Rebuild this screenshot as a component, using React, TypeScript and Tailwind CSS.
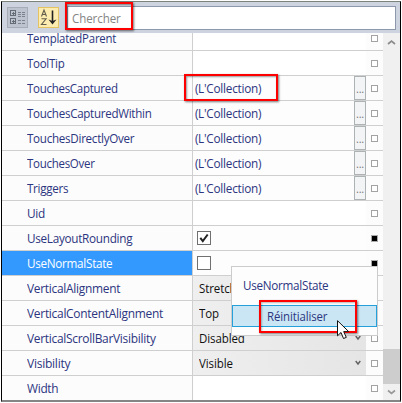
import React from "react";

type Kind = "empty" | "collection" | "checked" | "unchecked" | "select";
type Row = { name: string; kind: Kind; value?: string; set?: boolean; fit: string };

const rows: Row[] = [
  { name: "ToolTip", kind: "empty", fit: "scale-x-[0.92]" },
  { name: "TouchesCaptured", kind: "collection", fit: "scale-x-[0.92]" },
  { name: "TouchesCapturedWithin", kind: "collection", fit: "scale-x-[0.926]" },
  { name: "TouchesDirectlyOver", kind: "collection", fit: "scale-x-[0.93]" },
  { name: "TouchesOver", kind: "collection", fit: "scale-x-[0.92]" },
  { name: "Triggers", kind: "collection", fit: "scale-x-[0.93]" },
  { name: "Uid", kind: "empty", fit: "scale-x-[0.95]" },
  { name: "UseLayoutRounding", kind: "checked", set: true, fit: "scale-x-[0.938]" },
  { name: "UseNormalState", kind: "unchecked", set: true, fit: "scale-x-[0.935]" },
  { name: "VerticalAlignment", kind: "select", value: "Stretch", fit: "scale-x-[0.955]" },
  { name: "VerticalContentAlignment", kind: "select", value: "Top", fit: "scale-x-[0.957]" },
  { name: "VerticalScrollBarVisibility", kind: "select", value: "Disabled", fit: "scale-x-[0.955]" },
  { name: "Visibility", kind: "select", value: "Visible", fit: "scale-x-[0.97]" },
  { name: "Width", kind: "empty", fit: "scale-x-[0.95]" },
];

function Marker({ set }: { set?: boolean }) {
  return (
    <div className="w-[17px] shrink-0 bg-[#fcfcfc] pl-[5px] pt-[9px]">
      <div className={set ? "size-[7px] border border-[#aaa] bg-black" : "size-[7px] border border-[#a3a3a3] bg-white"} />
    </div>
  );
}

function Check({ on }: { on: boolean }) {
  return (
    <div className="ml-[4px] mt-[5px] size-[14px] border border-[#707070] bg-white">
      {on && (
        <svg width="12" height="12" viewBox="0 0 12 12" fill="none">
          <path d="M2.3 5.8 4.8 9.1 9.7 2.5" stroke="#222" strokeWidth="2" />
        </svg>
      )}
    </div>
  );
}

function Value({ row }: { row: Row }) {
  if (row.kind === "collection")
    return (
      <div className="flex grow justify-between bg-[#fdfdfd]">
        <span className="origin-left scale-x-[0.94] pl-[2px] leading-[25px] tracking-[-0.25px]">(L'Collection)</span>
        <span className="h-full w-[12px] border border-[#adb2b5] bg-[#f3f4f5] text-center text-[11px] leading-[24px] tracking-[-0.2px] text-[#777]">...</span>
      </div>
    );
  if (row.kind === "checked" || row.kind === "unchecked")
    return (
      <div className="grow bg-[#fdfdfd]">
        <Check on={row.kind === "checked"} />
      </div>
    );
  if (row.kind === "select")
    return (
      <div className="flex grow justify-between bg-linear-to-r from-[#efefef] to-[#e5e5e5] pl-[6px] pr-[5px] text-[#111]">
        <span className="origin-left scale-x-[0.92] leading-[25px] tracking-[-0.1px]">{row.value}</span>
        <svg className="mt-[9px]" width="6" height="6" viewBox="0 0 6 6" fill="none">
          <path d="M.7 1 3 4 5.3 1" stroke="#606060" strokeWidth="1.4" />
        </svg>
      </div>
    );
  return <div className="grow bg-white" />;
}

export default function App() {
  return (
    <div className="relative h-[403px] w-[402px] overflow-hidden bg-white pl-px pt-px font-['Open_Sans','Noto_Sans',sans-serif] text-[12.5px] text-[#2c3580]">
      <div className="flex h-[401px] w-[400px] flex-col border border-b-2 border-black border-b-[#858585] border-t-[#7b837b]">
        <div className="flex h-[31px] shrink-0 bg-[#ced4df] pl-[5px] pt-[5px]">
          <div className="size-[21px] border border-[#a7acb7] bg-[#bec4cf]">
            <svg width="19" height="19" viewBox="0 0 19 19" fill="none" shapeRendering="crispEdges">
              <path d="M2.5 2.5h5v5h-5zM2.5 10.5h5v5h-5zM5 3.5v3M3.5 5h3M5 11.5v3M3.5 13h3" stroke="#666c76" />
              <path d="M10 4.5h3M14 4.5h3M10 6.5h3M14 6.5h3M10 8.5h3M14 8.5h3M10 12.5h3M14 12.5h3M10 15.5h3M14 15.5h3" stroke="#7d838e" />
            </svg>
          </div>
          <div className="ml-[10px] size-[21px] border border-[#e4c365] bg-[#fdecaf]">
            <svg width="19" height="19" viewBox="0 0 19 19" fill="none">
              <path d="M2.5 8.5 5 2l2.5 6.5M3.4 6.5h3.2M2.5 10.8h4.6l-4.6 5.7h5" stroke="#625d4c" strokeWidth="1.1" />
              <path d="M13.5 2.5v12" stroke="#222" strokeWidth="1.6" />
              <path d="m9.5 11.5 4 5 4-5-4 1.5z" fill="#222" />
            </svg>
          </div>
          <div className="-mt-px ml-[8px] h-[24px] w-[329px] border border-[#8d98ad] bg-white pl-[4px] text-[13px] leading-[22px] tracking-[-0.1px] text-[#858585]">
            <span className="inline-block origin-left scale-x-[0.89]">Chercher</span>
          </div>
        </div>
        <div className="flex min-h-0 grow">
          <div className="w-[381px] shrink-0">
            <div className="flex h-[17px]">
              <div className="w-[191px] shrink-0 border-r border-[#cfcfcf] bg-[#fcfcfc] pl-[25px] leading-[12px] tracking-[-0.2px]">
                <span className="inline-block origin-left scale-x-[0.91]">TemplatedParent</span>
              </div>
              <div className="grow bg-white" />
              <div className="w-[17px] bg-[#fcfcfc] pl-[5px] pt-[2px]">
                <div className="size-[7px] border border-[#a3a3a3] bg-white" />
              </div>
            </div>
            {rows.map((row) => (
              <div key={row.name} className="flex h-[25px] border-t border-[#cfcfcf]">
                <div className={`w-[191px] shrink-0 border-r border-[#cfcfcf] pl-[25px] leading-[25px] tracking-[-0.3px] ${row.name === "UseNormalState" ? "bg-[#3399ff] text-white" : "bg-[#fcfcfc]"}`}>
                  <span className={`inline-block origin-left ${row.fit}`}>{row.name}</span>
                </div>
                <Value row={row} />
                <Marker set={row.set} />
              </div>
            ))}
          </div>
          <div className="flex w-[17px] flex-col items-center justify-between bg-[#f0f0f0]">
            <svg className="mt-[6px]" width="9" height="7" viewBox="0 0 9 7" fill="none">
              <path d="m1 5 3.5-3L8 5" stroke="#8c8c8c" strokeWidth="1.7" />
            </svg>
            <div className="flex w-full flex-col items-center">
              <div className="h-[35px] w-full bg-[#cdcdcd]" />
              <svg className="mb-[4px] mt-[5px]" width="9" height="7" viewBox="0 0 9 7" fill="none">
                <path d="m1 1.5 3.5 3 3.5-3" stroke="#999" strokeWidth="1.7" />
              </svg>
            </div>
          </div>
        </div>
      </div>

      <div className="absolute left-[231px] top-[266px] h-[70px] w-[147px] border border-[#cccccc] bg-[#fdfdfd]">
        <div className="h-[38px] pl-[11px] leading-[38px] tracking-[-0.3px]">
          <span className="inline-block origin-left scale-x-[0.935]">UseNormalState</span>
        </div>
        <div className="h-[22px] border border-[#26a0da] bg-[#cae6f4] pl-[34px] leading-[22px] tracking-[-0.1px]">
          <span className="inline-block origin-left scale-x-[0.91]">Réinitialiser</span>
        </div>
      </div>

      <div className="absolute left-[65px] top-[2px] h-[28px] w-[68px] border-2 border-[#fe0000] shadow-[1px_1px_2px_#0008,inset_1px_1px_2px_#0006]" />
      <div className="absolute left-[184px] top-[74px] h-[27px] w-[94px] border-2 border-[#fe0000] shadow-[1px_1px_2px_#0008,inset_1px_1px_2px_#0006]" />
      <div className="absolute left-[259px] top-[300px] h-[33px] w-[98px] border-2 border-[#fe0000] shadow-[1px_1px_2px_#0008,inset_1px_1px_2px_#0004]" />
      <svg className="absolute left-[337px] top-[320px]" width="13" height="20" viewBox="0 0 13 20">
        <path d="M.5.7v15.1l3.5-3.3 2.5 6 2.8-1.1-2.6-5.8h5z" fill="white" stroke="#111" />
      </svg>
    </div>
  );
}
